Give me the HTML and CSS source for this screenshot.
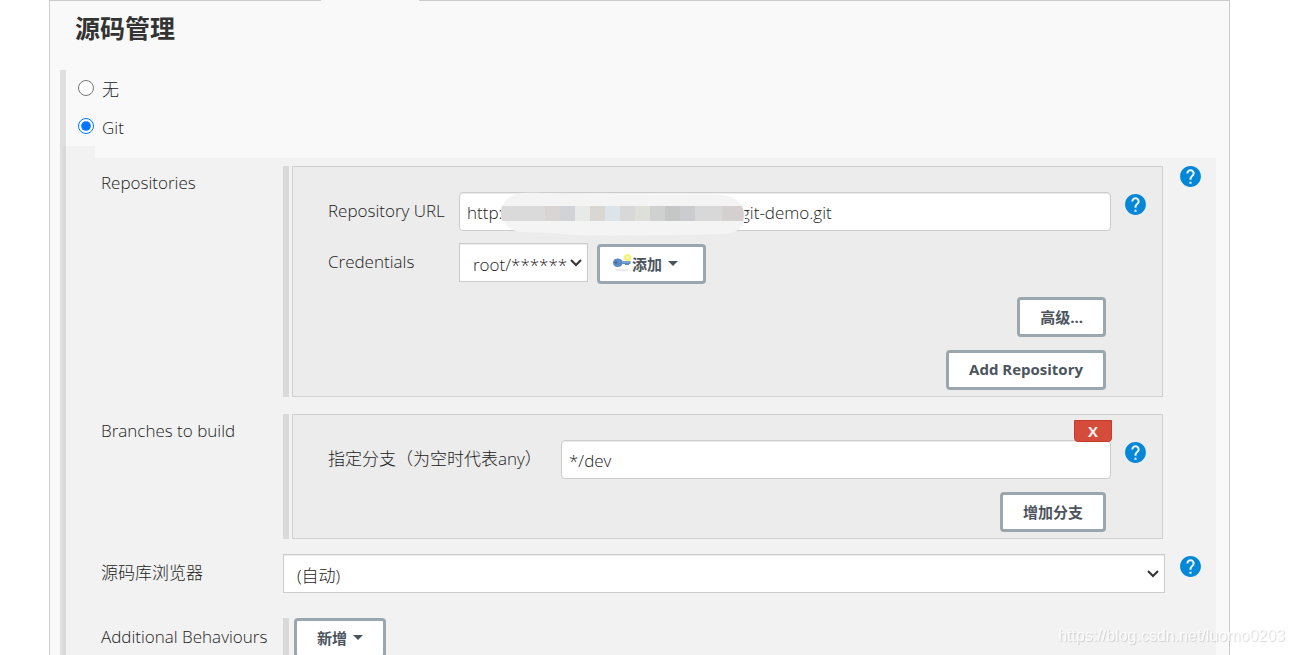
FILE: index.html
```html
<!DOCTYPE html>
<html lang="zh-CN">
<head>
    <meta charset="UTF-8">
    <meta name="viewport" content="width=device-width, initial-scale=1.0">
    <title>源码管理</title>
    <link rel="stylesheet" href="styles.css">
</head>
<body>
    <svg class="sprite" aria-hidden="true">
        <symbol id="icon-help" viewBox="0 0 24 24">
            <path fill="#0288d7" d="M12 2C6.48 2 2 6.48 2 12s4.48 10 10 10 10-4.480 10-10S17.520 2 12 2zm1 17h-2v-2h2v2zm2.070-7.750l-.9.920C13.450 12.900 13 13.500 13 15h-2v-.5c0-1.100.450-2.100 1.170-2.830l1.240-1.260c.370-.360.590-.860.590-1.410 0-1.100-.9-2-2-2s-2 .9-2 2H8c0-2.210 1.790-4 4-4s4 1.790 4 4c0 .880-.360 1.680-.930 2.250z"/>
        </symbol>
    </svg>

    <main class="config">
        <h2>源码管理</h2>
        <form class="scm">
            <label class="choice"><input type="radio" name="scm" value="none"> 无</label>
            <label class="choice"><input type="radio" name="scm" value="git" checked> Git</label>

            <div class="scm-body">
                <div class="scm-gap"></div>

                <div class="row">
                    <span class="row-label">Repositories</span>
                    <div class="repeated">
                        <div class="chunk chunk-repo">
                            <div class="field">
                                <label for="repoUrl">Repository URL</label>
                                <div class="url-box">
                                    <input class="text" type="text" id="repoUrl" value="http:                                                      git-demo.git">
                                    <svg class="mask" viewBox="0 0 246 44" aria-hidden="true">
                                        <path fill="#f4f4f4" d="M22 1Q38 0 60 2L180 3Q200 2 222 3C253 6 253 43 222 42Q190 43 150 43Q90 45 50 41L22 40C-6 37-6 4 22 1Z"/>
                                        <path fill="#dadada" d="M2 14H45V29H2Q0 21 2 14Z"/>
                                        <path fill="#d9d5d5" d="M45 14h15v15h-15z"/>
                                        <path fill="#d2d3d6" d="M60 14h15v15h-15z"/>
                                        <path fill="#e8eae7" d="M75 14h15v15h-15z"/>
                                        <path fill="#dad7d2" d="M90 14h15v15h-15z"/>
                                        <path fill="#dce3e9" d="M105 14h15v15h-15z"/>
                                        <path fill="#d8d8d8" d="M120 14h15v15h-15z"/>
                                        <path fill="#dedfd8" d="M135 14h15v15h-15z"/>
                                        <path fill="#cfd0d0" d="M150 14h15v15h-15z"/>
                                        <path fill="#c6c6c6" d="M165 14h15v15h-15z"/>
                                        <path fill="#cbccd0" d="M180 14h15v15h-15z"/>
                                        <path fill="#d8d8d8" d="M195 14h27v15h-27z"/>
                                        <path fill="#d3d0cf" d="M222 14H242Q245 21 243 29H222Z"/>
                                    </svg>
                                </div>
                                <a class="help" href="#" aria-label="Help"><svg><use href="#icon-help"/></svg></a>
                            </div>
                            <div class="field">
                                <label for="credentials">Credentials</label>
                                <div class="credentials">
                                    <div class="select select-small">
                                        <select id="credentials"><option>root/******</option></select>
                                        <svg class="arrow" viewBox="0 0 12 8"><path d="M1 1l5 5 5-5"/></svg>
                                    </div>
                                    <button class="btn btn-add" type="button">
                                        <svg class="key" viewBox="0 0 20 18">
                                            <ellipse cx="10" cy="16" rx="8" ry="1.500" fill="#ececec"/>
                                            <path fill="#5b89c2" d="M6 4.500c2 0 3.500 1 4.500 2.500H18.500V10h-1.500v1H13V10h-2.500C9.500 12 8 13 6 13 3 13 1 11.500 1 8.700S3 4.500 6 4.500z"/>
                                            <path fill="#9dbce0" d="M10 7.500h7.500v1H10z"/>
                                            <circle cx="4" cy="8.500" r="1.300" fill="#41699b"/>
                                            <circle cx="15.500" cy="3.500" r="3.500" fill="#f7f06a"/>
                                            <circle cx="15.500" cy="3.500" r="1.300" fill="#fffbd0"/>
                                        </svg>添加<span class="caret"></span>
                                    </button>
                                </div>
                            </div>
                            <div class="actions">
                                <button class="btn" type="button">高级...</button>
                                <button class="btn" type="button">Add Repository</button>
                            </div>
                        </div>
                    </div>
                    <a class="help" href="#" aria-label="Help"><svg><use href="#icon-help"/></svg></a>
                </div>

                <div class="row">
                    <span class="row-label">Branches to build</span>
                    <div class="repeated">
                        <div class="chunk chunk-branch">
                            <button class="btn-delete" type="button">X</button>
                            <div class="field">
                                <label for="branch">指定分支（为空时代表any）</label>
                                <input class="text" type="text" id="branch" value="*/dev">
                                <a class="help" href="#" aria-label="Help"><svg><use href="#icon-help"/></svg></a>
                            </div>
                            <div class="actions">
                                <button class="btn" type="button">增加分支</button>
                            </div>
                        </div>
                    </div>
                </div>

                <div class="row row-browser">
                    <label class="row-label" for="browser">源码库浏览器</label>
                    <div class="select">
                        <select id="browser"><option>(自动)</option></select>
                        <svg class="arrow" viewBox="0 0 12 8"><path d="M1 1l5 5 5-5"/></svg>
                    </div>
                    <a class="help" href="#" aria-label="Help"><svg><use href="#icon-help"/></svg></a>
                </div>

                <div class="row row-extra">
                    <span class="row-label">Additional Behaviours</span>
                    <div class="repeated">
                        <button class="btn" type="button">新增<span class="caret"></span></button>
                    </div>
                </div>
            </div>
        </form>
    </main>
    <div class="watermark">https://blog.csdn.net/luomo0203</div>
</body>
</html>
```
FILE: styles.css
```css
* {
    box-sizing: border-box;
}
body {
    margin: 0;
    background-color: #fff;
    color: #222;
    font-family: "Open Sans", "Noto Sans CJK SC", sans-serif;
    font-size: 17px;
    font-weight: 300;
    line-height: 24px;
}
.sprite {
    display: none;
}

/* outer panel */
.config {
    position: relative;
    margin: 0 64px 0 49px;
    padding: 9px 13px 0 10px;
    border: 1px solid #ccc;
    border-bottom: 0;
    background-color: #f9f9f9;
}
/* the active tab opens into the panel */
.config::before {
    content: "";
    position: absolute;
    top: -1px;
    left: 271px;
    width: 98px;
    height: 1px;
    background-color: #f9f9f9;
}
h2 {
    margin: 0 0 24px 15px;
    color: #333;
    font-size: 25px;
    font-weight: 700;
    line-height: 36px;
}
.scm {
    position: relative;
}
.scm::before {
    content: "";
    position: absolute;
    top: 0;
    bottom: 0;
    left: 0;
    width: 6px;
    background-color: rgba(0, 0, 0, 0.1);
}
.choice {
    display: flex;
    align-items: center;
    gap: 8px;
    height: 38px;
    padding: 2px 0 0 18px;
}
.choice input {
    width: 16px;
    height: 16px;
    margin: 0 0 4px;
}

/* git settings */
.scm-body {
    margin-left: 3px;
    background-color: #f2f2f2;
}
.scm-gap {
    height: 12px;
    margin: 0 0 8px 32px;
    background-color: #f9f9f9;
}
.row {
    display: grid;
    grid-template-columns: 182px 1fr 51px;
    align-items: start;
    margin-bottom: 17px;
    padding-left: 38px;
}
.row-label {
    padding-top: 5px;
}
.row-browser {
    margin-top: -2px;
    margin-bottom: 25px;
}
.row-browser .row-label,
.row-extra .row-label {
    padding-top: 7px;
}
.row-extra {
    margin-bottom: 0;
}
.repeated {
    margin-right: 2px;
    padding-left: 3px;
    border-left: 6px solid #d9d9d9;
}
.row-extra .repeated {
    padding-left: 5px;
}
.chunk {
    position: relative;
    padding: 25px 15px 6px 35px;
    border: 1px solid #d0d0d0;
    background-color: #ececec;
}
.field {
    display: grid;
    grid-template-columns: 131px 1fr 36px;
    align-items: start;
    margin-bottom: 12px;
}
.chunk-branch .field {
    grid-template-columns: 233px 1fr 36px;
    margin-bottom: 13px;
}
.field label {
    padding-top: 7px;
}
.text {
    display: block;
    width: 100%;
    height: 39px;
    padding: 1px 7px 0;
    border: 1px solid #ccc;
    border-radius: 4px;
    box-shadow: inset 0 1px 1px rgba(0, 0, 0, 0.08);
    color: #222;
    font: inherit;
}
.url-box {
    position: relative;
}
.mask {
    position: absolute;
    top: 0;
    left: 41px;
    width: 246px;
    height: 44px;
}
.credentials {
    display: flex;
    gap: 9px;
}
.select {
    position: relative;
}
.select select {
    display: block;
    width: 100%;
    height: 39px;
    padding: 4px 13px 0;
    border: 1px solid #ccc;
    border-radius: 0;
    box-shadow: inset 0 1px 1px rgba(0, 0, 0, 0.08);
    background-color: #fff;
    color: #222;
    font: inherit;
    appearance: none;
}
.select-small {
    width: 129px;
}
.arrow {
    position: absolute;
    top: 16px;
    right: 6px;
    width: 12px;
    height: 8px;
    fill: none;
    stroke: #333;
    stroke-width: 2;
}
.help {
    justify-self: start;
    height: 21px;
    margin-left: 15px;
}
.row-browser .help,
.field .help {
    margin-top: 2px;
}
.field .help {
    margin-left: 14px;
}
.help svg {
    display: block;
    width: 25px;
    height: 25px;
    margin: -2px;
}

/* buttons */
.btn {
    display: inline-flex;
    align-items: center;
    height: 40px;
    padding: 0 20px 2px;
    border: 3px solid #9aa7af;
    border-radius: 4px;
    background-color: #fff;
    color: #4b545d;
    font-family: inherit;
    font-size: 15px;
    font-weight: 700;
    cursor: pointer;
}
.btn:hover {
    background-color: #f5f7f8;
}
.btn-add {
    margin-top: 1px;
    padding: 0 25px 2px 12px;
}
.key {
    width: 20px;
    height: 18px;
}
.caret {
    margin-left: 6px;
    border: 5px solid transparent;
    border-top-color: #4b545d;
    border-bottom: 0;
}
.actions {
    display: flex;
    flex-direction: column;
    align-items: flex-end;
    gap: 13px;
    padding-right: 41px;
}
.chunk-repo .actions {
    margin-top: 13px;
}
.btn-delete {
    position: absolute;
    top: 5px;
    right: 50px;
    width: 38px;
    height: 22px;
    padding: 0;
    border: 1px solid #c23b2b;
    border-radius: 0 0 4px 4px;
    background-color: #d54c3b;
    color: #eee;
    font-family: inherit;
    font-size: 15px;
    font-weight: 700;
    line-height: 20px;
    cursor: pointer;
}
.watermark {
    position: fixed;
    right: 9px;
    bottom: 7px;
    color: rgba(255, 255, 255, 0.8);
    font-family: "Liberation Sans", Arial, sans-serif;
    font-size: 16px;
    font-weight: 400;
    text-shadow: 1px 1px 1px rgba(0, 0, 0, 0.15);
}
```
